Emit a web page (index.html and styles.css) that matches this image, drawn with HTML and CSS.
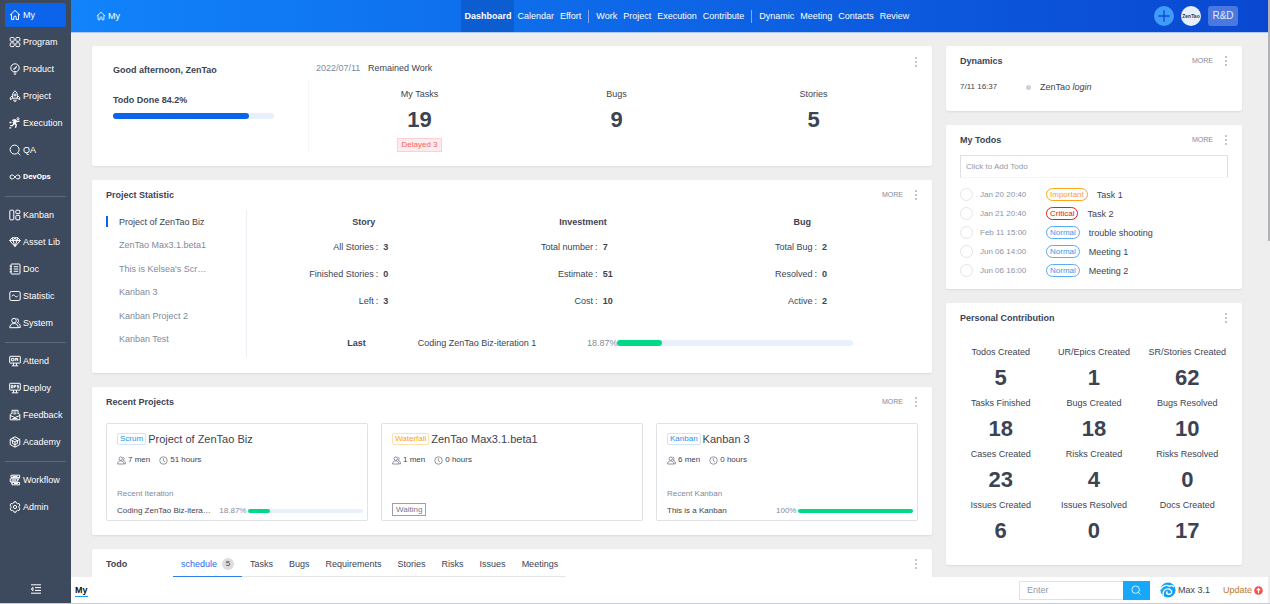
FILE: index.html
```html
<!DOCTYPE html>
<html lang="en">
<head>
<meta charset="utf-8">
<title>Dashboard - ZenTao</title>
<link rel="stylesheet" href="styles.css">
</head>
<body>
<svg class="sprite" aria-hidden="true">
  <symbol id="i-home" viewBox="0 0 12 12"><path d="M1 6.2 6 1.4l5 4.8M2.5 5.2v5.3h2.3V8.3a1.2 1.2 0 0 1 2.4 0v2.2h2.3V5.2"/></symbol>
  <symbol id="i-grid" viewBox="0 0 12 12"><rect x="1.2" y="1.5" width="4" height="3.8" rx="1"/><rect x="6.8" y="1.5" width="4" height="3.8" rx="1"/><rect x="1.2" y="6.8" width="4" height="3.8" rx="1"/><rect x="6.8" y="6.8" width="4" height="3.8" rx="1"/></symbol>
  <symbol id="i-bulb" viewBox="0 0 12 12"><path d="M4.3 8.6C2.6 7.8 1.8 6.500 1.800 5a4.200 4.200 0 0 1 8.400 0c0 1.500-.8 2.800-2.500 3.600zM4.600 10h2.800M5.300 11.400h1.400M4.200 6.300 7.800 3.200M5 6.800l2.500-2.700"/></symbol>
  <symbol id="i-rocket" viewBox="0 0 12 12"><path d="M6 .8C4 2.200 3.400 4 3.600 8.200h4.800C8.600 4 8 2.200 6 .8zM3.500 5.500 1.300 7.600v2l2.400-1.300M8.500 5.500l2.200 2.100v2L8.300 8.300M5 9.500v1.700h2V9.500"/><circle cx="6" cy="5" r="1"/></symbol>
  <symbol id="i-run" viewBox="0 0 12 12"><path d="M3.200 3.400 6 2.800l2 1.700 2.500-.3M6.700 3.200 4.800 6.300l2.500 1.600-.8 3M4.500 7 3.600 8.700H1.200M6.300 3 4 6M.5 5.500h2M.3 10.800h2M5.400 4.500l1.800 2M6 3.500l1.200 1.200M5.200 5.500l1 .8" stroke-width="1.300"/><circle cx="9" cy="1.700" r="1"/></symbol>
  <symbol id="i-search" viewBox="0 0 12 12"><circle cx="5.600" cy="5.600" r="4.500"/><path d="m8.800 8.800 2.500 2.500"/></symbol>
  <symbol id="i-loop" viewBox="0 0 12 12"><path d="M6 6C5 4.600 4.200 4 3 4a2 2 0 0 0 0 4c1.200 0 2-.6 3-2s1.800-2 3-2a2 2 0 0 1 0 4c-1.200 0-2-.6-3-2z"/></symbol>
  <symbol id="i-kanban" viewBox="0 0 12 12"><rect x=".8" y="1.200" width="4" height="9.600" rx=".8"/><rect x="6.800" y="1.200" width="4" height="3.400" rx=".8"/><rect x="6.800" y="6.400" width="4" height="4.400" rx=".8"/></symbol>
  <symbol id="i-gem" viewBox="0 0 12 12"><path d="M3 1.800h6L11.300 4.600 6 10.600.7 4.600zM.7 4.600h10.600M4 4.600l2 5.800 2-5.800M3.200 2 4 4.600l2-2.700 2 2.700.8-2.600"/></symbol>
  <symbol id="i-doc" viewBox="0 0 12 12"><rect x="2" y="1" width="9" height="10" rx=".8"/><path d="M.6 3.200h2.400M.6 6h2.400M.6 8.800h2.400M4.800 3.700h4.400M4.800 6h4.400M4.800 8.300h4.400"/></symbol>
  <symbol id="i-stat" viewBox="0 0 12 12"><rect x=".8" y="1.500" width="10.400" height="9" rx="1.500"/><path d="M2.800 6.300c1-1.800 2-1.800 3-.4s2 1.400 3.200-.2"/></symbol>
  <symbol id="i-users" viewBox="0 0 12 12"><circle cx="5" cy="3.600" r="2.300"/><path d="M.8 10.700c0-2.600 1.500-4.200 4.200-4.200s4.200 1.600 4.200 4.200zM7.600 1.500a2.200 2.200 0 0 1 .6 4.200c2 .4 3.100 1.900 3.100 4.800H9.500"/></symbol>
  <symbol id="i-screen" viewBox="0 0 12 12"><rect x=".7" y="1.300" width="10.600" height="6.800" rx=".5"/><path d="M2.600 3.400h2.200v2.400H2.600zM6.200 5.900V3.400h2.500v2.500M6.200 4.800h2.500M4.500 8.200v2.300M7.500 8.200v2.300M2.800 10.800h6.400"/></symbol>
  <symbol id="i-deploy" viewBox="0 0 12 12"><rect x=".7" y="1.300" width="10.600" height="6.800" rx=".5"/><path d="M2.300 3.400v2.500h1.500V3.400zM5.200 6V3.400h1.400v1.300H5.200M9.700 3.400H8.200v1.200h1.400v1.300H8.200M4.500 8.200v2.300M7.500 8.200v2.300M2.800 10.800h6.400"/></symbol>
  <symbol id="i-feedback" viewBox="0 0 12 12"><path d="M3 5V1.300h6V5M4.400 3h3M4.400 4.800h3M3 4.200 1.200 5.500v5.300h9.600V5.500L9 4.200M1.200 6.500 6 8.600l4.800-2.100M3.500 9.600h5"/></symbol>
  <symbol id="i-academy" viewBox="0 0 12 12"><path d="M6 .8 10.800 3.400v5.200L6 11.200 1.200 8.600V3.400zM1.200 3.400 6 6l4.800-2.600M6 6v5M3.500 4.700v2.700L6 8.700l2.500-1.300V4.700M3.500 2.200 8.400 4.700"/></symbol>
  <symbol id="i-flow" viewBox="0 0 12 12"><path d="M2 1.200h8.600v2.400H2zM1.200 4.800h7.600v2.400H1.200zM3 8.400h7.600v2.400H3zM10.600 3.600 8.800 6M1.200 7.200 3 9.600M3.500 2.400h5M3 6h4M5 9.600h4"/></symbol>
  <symbol id="i-gear" viewBox="0 0 12 12"><path d="M4.700 2 5 .8h2l.3 1.200 1.400.8 1.200-.4 1 1.800-.9.900v1.800l.9.900-1 1.800-1.200-.4-1.400.8-.3 1.200H5L4.700 10l-1.400-.8-1.200.4-1-1.800.9-.9V5.100l-.9-.9 1-1.800 1.200.4z"/><circle cx="6" cy="6" r="1.600"/></symbol>
  <symbol id="i-clock" viewBox="0 0 12 12"><circle cx="6" cy="6" r="5"/><path d="M5.800 2.800v3.400L8 8"/></symbol>
  <symbol id="i-fold" viewBox="0 0 12 12"><path d="M1 1.800h10M5 4.600h6M5 7.400h6M1 10.200h10M3 4.300 1.200 6 3 7.700z"/></symbol>
  <symbol id="i-plus" viewBox="0 0 12 12"><path d="M6 .3v11.400M.3 6h11.400" stroke-width="1.400"/></symbol>
  <symbol id="i-more" viewBox="0 0 12 12"><path d="M6 1v2M6 5v2M6 9v2"/></symbol>
</svg>

<div class="app">
  <aside class="sidebar">
    <nav class="side-nav" aria-label="Main">
      <a class="side-link active" href="#"><svg class="icon"><use href="#i-home"/></svg>My</a>
      <a class="side-link" href="#"><svg class="icon"><use href="#i-grid"/></svg>Program</a>
      <a class="side-link" href="#"><svg class="icon"><use href="#i-bulb"/></svg>Product</a>
      <a class="side-link" href="#"><svg class="icon"><use href="#i-rocket"/></svg>Project</a>
      <a class="side-link" href="#"><svg class="icon"><use href="#i-run"/></svg>Execution</a>
      <a class="side-link" href="#"><svg class="icon"><use href="#i-search"/></svg>QA</a>
      <a class="side-link narrow" href="#"><svg class="icon"><use href="#i-loop"/></svg>DevOps</a>
      <hr class="side-rule">
      <a class="side-link" href="#"><svg class="icon"><use href="#i-kanban"/></svg>Kanban</a>
      <a class="side-link" href="#"><svg class="icon"><use href="#i-gem"/></svg>Asset Lib</a>
      <a class="side-link" href="#"><svg class="icon"><use href="#i-doc"/></svg>Doc</a>
      <a class="side-link" href="#"><svg class="icon"><use href="#i-stat"/></svg>Statistic</a>
      <a class="side-link" href="#"><svg class="icon"><use href="#i-users"/></svg>System</a>
      <hr class="side-rule">
      <a class="side-link" href="#"><svg class="icon"><use href="#i-screen"/></svg>Attend</a>
      <a class="side-link" href="#"><svg class="icon"><use href="#i-deploy"/></svg>Deploy</a>
      <a class="side-link" href="#"><svg class="icon"><use href="#i-feedback"/></svg>Feedback</a>
      <a class="side-link" href="#"><svg class="icon"><use href="#i-academy"/></svg>Academy</a>
      <hr class="side-rule">
      <a class="side-link" href="#"><svg class="icon"><use href="#i-flow"/></svg>Workflow</a>
      <a class="side-link" href="#"><svg class="icon"><use href="#i-gear"/></svg>Admin</a>
    </nav>
    <button class="fold" type="button" aria-label="Collapse menu"><svg class="icon"><use href="#i-fold"/></svg></button>
  </aside>

  <div class="page">
    <header class="topbar">
      <a class="crumb" href="#"><svg class="icon small"><use href="#i-home"/></svg>My</a>
      <nav class="top-nav" aria-label="My">
        <a class="top-link active" href="#">Dashboard</a>
        <a class="top-link" href="#">Calendar</a>
        <a class="top-link" href="#">Effort</a>
        <span class="top-rule"></span>
        <a class="top-link" href="#">Work</a>
        <a class="top-link" href="#">Project</a>
        <a class="top-link" href="#">Execution</a>
        <a class="top-link" href="#">Contribute</a>
        <span class="top-rule"></span>
        <a class="top-link" href="#">Dynamic</a>
        <a class="top-link" href="#">Meeting</a>
        <a class="top-link" href="#">Contacts</a>
        <a class="top-link" href="#">Review</a>
      </nav>
      <div class="top-tools">
        <button class="add" type="button" aria-label="Create"><svg class="icon"><use href="#i-plus"/></svg></button>
        <button class="avatar" type="button">ZenTao</button>
        <button class="vision" type="button">R&amp;D</button>
      </div>
    </header>

    <main class="board">
      <div class="col">
        <section class="card welcome">
          <div class="greeting">
            <h2 class="hello">Good afternoon, ZenTao</h2>
            <p class="done">Todo Done 84.2%</p>
            <div class="bar blue"><div class="fill" style="width:84.2%"></div></div>
          </div>
          <div class="remained">
            <div class="remained-head"><span><time class="muted">2022/07/11</time> Remained Work</span><button class="kebab" type="button" aria-label="Options"><svg class="icon"><use href="#i-more"/></svg></button></div>
            <div class="counts">
              <div class="count"><span class="count-label">My Tasks</span><strong class="figure">19</strong><span class="delayed">Delayed 3</span></div>
              <div class="count"><span class="count-label">Bugs</span><strong class="figure">9</strong></div>
              <div class="count"><span class="count-label">Stories</span><strong class="figure">5</strong></div>
            </div>
          </div>
        </section>

        <section class="card">
          <div class="card-head"><h2 class="title">Project Statistic</h2><a class="more" href="#">MORE</a><button class="kebab" type="button" aria-label="Options"><svg class="icon"><use href="#i-more"/></svg></button></div>
          <div class="stat">
            <div class="stat-list">
              <a class="stat-item active" href="#">Project of ZenTao Biz</a>
              <a class="stat-item" href="#">ZenTao Max3.1.beta1</a>
              <a class="stat-item" href="#">This is Kelsea's Scr…</a>
              <a class="stat-item" href="#">Kanban 3</a>
              <a class="stat-item" href="#">Kanban Project 2</a>
              <a class="stat-item" href="#">Kanban Test</a>
            </div>
            <div class="stat-body">
              <div class="stat-cols">
                <div><h3 class="stat-title">Story</h3><dl class="facts"><dt>All Stories</dt><dd>3</dd><dt>Finished Stories</dt><dd>0</dd><dt>Left</dt><dd>3</dd></dl></div>
                <div><h3 class="stat-title">Investment</h3><dl class="facts"><dt>Total number</dt><dd>7</dd><dt>Estimate</dt><dd>51</dd><dt>Cost</dt><dd>10</dd></dl></div>
                <div><h3 class="stat-title">Bug</h3><dl class="facts"><dt>Total Bug</dt><dd>2</dd><dt>Resolved</dt><dd>0</dd><dt>Active</dt><dd>2</dd></dl></div>
              </div>
              <div class="last">
                <strong class="last-label">Last</strong>
                <span>Coding ZenTao Biz-iteration 1</span>
                <span class="percent">18.87%</span>
                <div class="bar green"><div class="fill" style="width:18.87%"></div></div>
              </div>
            </div>
          </div>
        </section>

        <section class="card">
          <div class="card-head"><h2 class="title">Recent Projects</h2><a class="more" href="#">MORE</a><button class="kebab" type="button" aria-label="Options"><svg class="icon"><use href="#i-more"/></svg></button></div>
          <div class="tiles">
            <article class="tile">
              <h3 class="tile-title"><span class="tag">Scrum</span>Project of ZenTao Biz</h3>
              <p class="meta"><svg class="icon tiny"><use href="#i-users"/></svg>7 men<svg class="icon tiny next"><use href="#i-clock"/></svg>51 hours</p>
              <p class="recent">Recent Iteration</p>
              <div class="tile-run"><span>Coding ZenTao Biz-itera…</span><span class="percent">18.87%</span><div class="bar green thin"><div class="fill" style="width:18.87%"></div></div></div>
            </article>
            <article class="tile">
              <h3 class="tile-title"><span class="tag orange">Waterfall</span>ZenTao Max3.1.beta1</h3>
              <p class="meta"><svg class="icon tiny"><use href="#i-users"/></svg>1 men<svg class="icon tiny next"><use href="#i-clock"/></svg>0 hours</p>
              <span class="waiting">Waiting</span>
            </article>
            <article class="tile">
              <h3 class="tile-title"><span class="tag">Kanban</span>Kanban 3</h3>
              <p class="meta"><svg class="icon tiny"><use href="#i-users"/></svg>6 men<svg class="icon tiny next"><use href="#i-clock"/></svg>0 hours</p>
              <p class="recent">Recent Kanban</p>
              <div class="tile-run"><span>This is a Kanban</span><span class="percent">100%</span><div class="bar green thin"><div class="fill" style="width:100%"></div></div></div>
            </article>
          </div>
        </section>

        <section class="card">
          <div class="card-head">
            <h2 class="title todo-title">Todo</h2>
            <nav class="tabs" aria-label="Todo">
              <a class="tab active" href="#">schedule<span class="badge">5</span></a>
              <a class="tab" href="#">Tasks</a>
              <a class="tab" href="#">Bugs</a>
              <a class="tab" href="#">Requirements</a>
              <a class="tab" href="#">Stories</a>
              <a class="tab" href="#">Risks</a>
              <a class="tab" href="#">Issues</a>
              <a class="tab" href="#">Meetings</a>
            </nav>
            <button class="kebab" type="button" aria-label="Options"><svg class="icon"><use href="#i-more"/></svg></button>
          </div>
        </section>
      </div>

      <div class="col">
        <section class="card">
          <div class="card-head"><h2 class="title">Dynamics</h2><a class="more" href="#">MORE</a><button class="kebab" type="button" aria-label="Options"><svg class="icon"><use href="#i-more"/></svg></button></div>
          <p class="event"><time class="event-time">7/11 16:37</time><span class="dot"></span><span>ZenTao <em>login</em></span></p>
        </section>

        <section class="card">
          <div class="card-head"><h2 class="title">My Todos</h2><a class="more" href="#">MORE</a><button class="kebab" type="button" aria-label="Options"><svg class="icon"><use href="#i-more"/></svg></button></div>
          <div class="todos">
            <input class="todo-add" type="text" placeholder="Click to Add Todo" aria-label="Click to Add Todo">
            <label class="todo"><input class="check" type="checkbox"><time class="when">Jan 20 20:40</time><span class="pill important">Important</span>Task 1</label>
            <label class="todo"><input class="check" type="checkbox"><time class="when">Jan 21 20:40</time><span class="pill critical">Critical</span>Task 2</label>
            <label class="todo"><input class="check" type="checkbox"><time class="when">Feb 11 15:00</time><span class="pill">Normal</span>trouble shooting</label>
            <label class="todo"><input class="check" type="checkbox"><time class="when">Jun 06 14:00</time><span class="pill">Normal</span>Meeting 1</label>
            <label class="todo"><input class="check" type="checkbox"><time class="when">Jun 06 16:00</time><span class="pill">Normal</span>Meeting 2</label>
          </div>
        </section>

        <section class="card">
          <div class="card-head"><h2 class="title">Personal Contribution</h2><button class="kebab" type="button" aria-label="Options"><svg class="icon"><use href="#i-more"/></svg></button></div>
          <div class="contrib">
            <div class="count"><span class="count-label">Todos Created</span><strong class="figure">5</strong></div>
            <div class="count"><span class="count-label">UR/Epics Created</span><strong class="figure">1</strong></div>
            <div class="count"><span class="count-label">SR/Stories Created</span><strong class="figure">62</strong></div>
            <div class="count"><span class="count-label">Tasks Finished</span><strong class="figure">18</strong></div>
            <div class="count"><span class="count-label">Bugs Created</span><strong class="figure">18</strong></div>
            <div class="count"><span class="count-label">Bugs Resolved</span><strong class="figure">10</strong></div>
            <div class="count"><span class="count-label">Cases Created</span><strong class="figure">23</strong></div>
            <div class="count"><span class="count-label">Risks Created</span><strong class="figure">4</strong></div>
            <div class="count"><span class="count-label">Risks Resolved</span><strong class="figure">0</strong></div>
            <div class="count"><span class="count-label">Issues Created</span><strong class="figure">6</strong></div>
            <div class="count"><span class="count-label">Issues Resolved</span><strong class="figure">0</strong></div>
            <div class="count"><span class="count-label">Docs Created</span><strong class="figure">17</strong></div>
          </div>
        </section>
      </div>
    </main>

    <footer class="footer">
      <a class="open-app" href="#">My</a>
      <form class="search">
        <input class="search-box" type="search" placeholder="Enter" aria-label="Search">
        <button class="search-go" type="button" aria-label="Search"><svg class="icon small"><use href="#i-search"/></svg></button>
      </form>
      <a class="version" href="#">
        <svg class="logo" viewBox="0 0 16 16"><circle cx="8" cy="8" r="7.600" fill="#16a0f5"/><path d="M.8 6.800C3.200 3.200 7 2.600 9.300 4.300c1.500-.9 3.200-.8 4.300.3M3.300 13C2.300 9 5.500 6.200 9 7c3.200.8 3.500 4.300 1 5.200-2 .7-3.900-.8-3.100-2.300" fill="none" stroke="#fff" stroke-width="1.400" stroke-linecap="round"/></svg>
        Max 3.1</a>
      <a class="update" href="#">Update
        <svg class="up" viewBox="0 0 10 10"><circle cx="5" cy="5" r="4.800" fill="#f8514f"/><path d="M5 8V3M3 4.800 5 2.700l2 2.100" fill="none" stroke="#fff" stroke-width="1.200"/></svg></a>
    </footer>
  </div>
  <div class="scroll"><div class="thumb"></div></div>
</div>
</body>
</html>
```

FILE: styles.css
```css
* { box-sizing: border-box; margin: 0; padding: 0; }

body {
  font: 9px/12px "Liberation Sans", Arial, sans-serif;
  color: #3c4353;
  background: #eee;
}

a { color: inherit; text-decoration: none; }
button, input { font: inherit; color: inherit; border: 0; background: none; }
h2, h3 { font-size: 9px; }

.sprite { position: absolute; width: 0; height: 0; }
.icon { width: 12px; height: 12px; flex: none; fill: none; stroke: currentColor; stroke-width: 1; }
.icon.small { width: 10px; height: 10px; }
.icon.tiny { width: 9px; height: 9px; }

.app { display: flex; height: 100vh; border-bottom: 1px solid #c5cdd9; overflow: hidden; }

/* Sidebar */
.sidebar { display: flex; flex-direction: column; justify-content: space-between; flex: none; width: 71px; padding: 3px 5px 8px; background: #3d4a5e; color: #fff; }
.side-nav { display: flex; flex-direction: column; gap: 3px; }
.side-link { display: flex; align-items: center; gap: 2px; height: 24px; padding-left: 4px; border-radius: 2px; }
.side-link.active { background: #0c64eb; }
.side-link.narrow { font-family: Roboto, "Liberation Sans", sans-serif; font-size: 8px; font-weight: bold; }
.side-rule { height: 1px; margin: 4px 0 3px; border: 0; background: #5e6a7c; }
.fold { align-self: center; display: flex; }

/* Top bar */
.page { display: flex; flex-direction: column; flex: 1; min-width: 0; }
.topbar { display: grid; grid-template-columns: 393fr auto 358fr; flex: none; height: 33px; border-bottom: 1px solid #adc8f2; background: linear-gradient(90deg, #1183fb, #0a48d1); color: #fff; }
.crumb { display: flex; align-items: center; gap: 2px; padding-left: 25px; }
.top-nav { display: flex; align-items: center; }
.top-link { display: flex; align-items: center; height: 32px; padding: 0 3px; }
.top-link.active { font-weight: bold; background: #0b5dd0; }
.top-rule { width: 1px; height: 13px; margin: 0 4px; background: #7fa9f3; }
.top-tools { display: flex; align-items: center; justify-content: flex-end; gap: 7px; padding-right: 30px; }
.add, .avatar { display: flex; align-items: center; justify-content: center; width: 20px; height: 20px; border-radius: 50%; }
.add { background: #419bf9; color: #0b4fd6; }
.avatar { background: #e8effc; color: #27364f; font-size: 5px; font-weight: bold; }
.vision { width: 30px; height: 20px; border-radius: 3px; background: #4a78de; font-size: 10px; color: #e6edfb; }

/* Board */
.board { display: grid; grid-template-columns: minmax(0, 840fr) minmax(0, 296fr); gap: 14px; flex: 1; min-height: 0; padding: 13px 26px 0 21px; overflow: hidden; }
.col { display: flex; flex-direction: column; gap: 14px; }
.card { border-radius: 2px; background: #fff; box-shadow: 0 1px 2px rgba(0, 0, 0, .08); }
.card-head { display: flex; align-items: center; height: 30px; padding: 0 10px 0 14px; }
.title { flex: 1; }
.more { margin-right: 7px; font-size: 7px; color: #838a9d; }
.kebab { display: flex; color: #838a9d; }
.muted { margin-right: 5px; color: #838a9d; }

.bar { height: 6px; border-radius: 3px; background: #e8f0fb; }
.bar .fill { height: 100%; border-radius: 3px; }
.bar.thin { height: 4px; }
.blue .fill { background: #0c64eb; }
.green .fill { background: #00da88; }
.percent { text-align: right; color: #838a9d; }

.count { display: flex; flex-direction: column; align-items: center; }
.count-label { line-height: 22px; }
.figure { font-size: 22px; line-height: 29px; }

/* Welcome */
.welcome { display: grid; grid-template-columns: 216fr 624fr; padding-bottom: 14px; }
.greeting { padding: 18px 34px 0 21px; }
.done { margin: 18px 0 7px; font-weight: bold; }
.remained { display: flex; flex-direction: column; }
.remained-head { display: flex; justify-content: space-between; padding: 10px 10px 0 8px; }
.remained-head > span { padding-top: 6px; }
.counts { display: grid; grid-template-columns: repeat(3, 1fr); margin-top: 6px; padding: 6px 20px 0 12px; border-left: 1px solid #f4f5f8; }
.counts .count-label { line-height: 16px; }
.counts .figure { line-height: 36px; }
.delayed { padding: 0 3px; border: 1px solid #fbcfd3; background: #fdecee; font-size: 8px; color: #fb5d5d; }

/* Project statistic */
.stat { display: grid; grid-template-columns: minmax(0, 141fr) minmax(0, 671fr); padding: 0 14px 16px; }
.stat-list { display: flex; flex-direction: column; padding-bottom: 6px; border-right: 1px solid #eceef5; }
.stat-item { display: flex; align-items: center; flex: 1; color: #838a9d; }
.stat-item::before { content: ""; flex: none; width: 2px; height: 11px; margin-right: 11px; }
.stat-item.active { color: #3c4353; }
.stat-item.active::before { background: #0c64eb; }
.stat-body { padding-left: 7px; padding-right: 6px; }
.stat-cols { display: grid; grid-template-columns: repeat(3, 1fr); }
.stat-title { line-height: 24px; text-align: center; }
.facts { display: grid; grid-template-columns: 58fr 42fr; column-gap: 5px; line-height: 27px; }
.facts dt { text-align: right; }
.facts dt::after { content: ":"; margin-left: 2px; }
.facts dd { font-weight: bold; }
.last { display: grid; grid-template-columns: 164fr 148fr 52fr 236fr 59fr; align-items: center; height: 28px; margin-top: 14px; }
.last-label { padding-right: 52px; text-align: right; }

/* Recent projects */
.tiles { display: grid; grid-template-columns: repeat(3, minmax(0, 1fr)); gap: 13px; padding: 6px 14px 14px; }
.tile { display: flex; flex-direction: column; padding: 3px 4px 1px 10px; border: 1px solid #e0e2e6; border-radius: 2px; font-size: 8px; }
.tile-title { display: flex; align-items: center; gap: 2px; height: 24px; font-size: 11px; font-weight: normal; }
.tag { padding: 0 2px; border: 1px solid #cfe5fc; border-radius: 2px; font-size: 8px; line-height: 10px; color: #2f8ff0; }
.tag.orange { border-color: #fde0b0; color: #ff9f1a; }
.meta { display: flex; align-items: center; gap: 2px; height: 18px; }
.meta .icon { color: #6b7385; }
.meta .next { margin-left: 7px; }
.recent { margin-top: 17px; line-height: 16px; color: #838a9d; }
.tile-run { display: grid; grid-template-columns: 96fr 32fr 115fr; column-gap: 2px; align-items: center; height: 17px; white-space: nowrap; }
.waiting { align-self: flex-start; margin: auto 0 3px; padding: 0 3px; border: 1px solid #9aa0b0; line-height: 11px; color: #737a8e; }

/* Todo tabs */
.todo-title { flex: none; width: 67px; }
.tabs { display: flex; align-self: flex-start; }
.tab { display: flex; align-items: center; height: 28px; padding: 2px 8px 0; border-bottom: 1px solid #e6e6e6; }
.tab.active { border-color: #2e7ff0; color: #2a6df0; }
.badge { width: 12px; margin-left: 5px; border-radius: 6px; background: #ddd; color: #3c4353; font-size: 8px; text-align: center; }
.tabs + .kebab { margin-left: auto; }

/* Right column */
.event { display: flex; align-items: center; height: 22px; margin: 0 14px 13px; }
.event-time { width: 66px; font-size: 8px; }
.dot { width: 5px; height: 5px; margin-right: 9px; border-radius: 50%; background: #cbd0db; }

.todos { display: flex; flex-direction: column; padding: 0 14px 9px; }
.todo-add { height: 23px; margin-bottom: 7px; padding: 0 5px; border: 1px solid #dcdfe3; border-bottom-color: #f6f6f6; font-size: 8px; }
.todo-add::placeholder, .search-box::placeholder { color: #9299a8; }
.todo { display: flex; align-items: center; height: 19px; }
.check { appearance: none; width: 13px; height: 13px; margin-right: 7px; border: 1px solid #e2e4e8; border-radius: 50%; }
.when { width: 66px; font-size: 8px; color: #8d93a3; }
.pill { margin-right: 9px; padding: 0 3px; border: 1px solid #58adf5; border-radius: 7px; font-size: 8px; line-height: 11px; color: #3a98f0; }
.pill.important { border-color: #ffa41c; color: #ff9a3c; }
.pill.critical { border-color: #d22; color: #d22; }

.contrib { display: grid; grid-template-columns: repeat(3, 1fr); padding: 8px 8px 20px; }

/* Footer */
.footer { display: flex; align-items: center; flex: none; height: 26px; padding: 0 5px 0 4px; background: #fff; }
.open-app { margin-right: auto; border-bottom: 1px solid #1a9bea; font-weight: bold; color: #111; }
.search { display: flex; height: 19px; margin-right: 10px; }
.search-box { width: 104px; padding: 0 7px; border: 1px solid #dfe1e5; border-right: 0; }
.search-go { display: flex; align-items: center; justify-content: center; width: 27px; background: #16a8fa; color: #fff; }
.version, .update { display: flex; align-items: center; gap: 2px; }
.version { margin-right: 13px; }
.update { color: #c07a2c; }
.logo { width: 16px; height: 16px; }
.up { width: 9px; height: 9px; }

.scroll { flex: none; width: 2px; background: #eee; }
.thumb { height: 40%; background: #b3b3b6; }
```
